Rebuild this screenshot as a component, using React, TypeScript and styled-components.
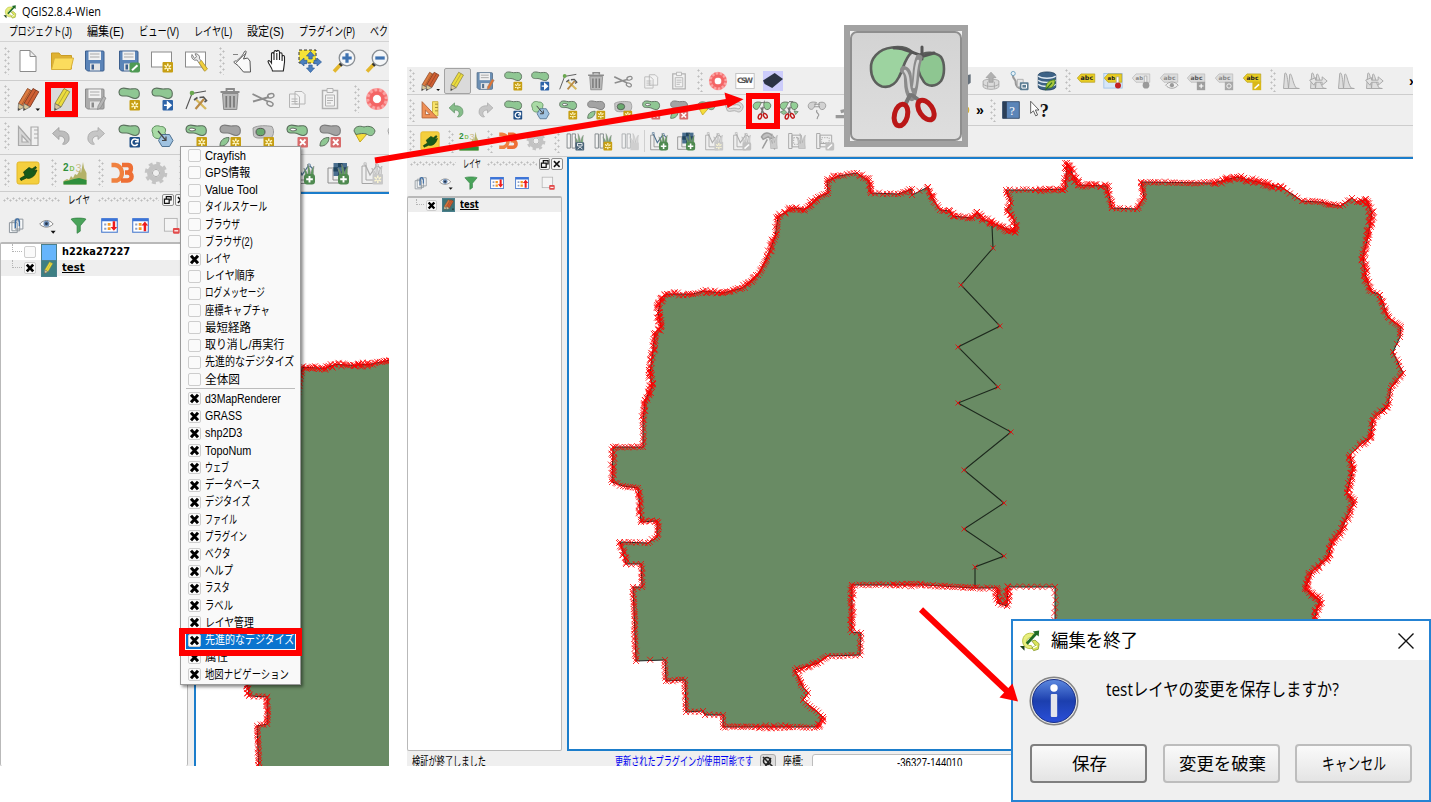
import React, { useLayoutEffect, useRef, useState } from 'react';
import styled, { createGlobalStyle } from 'styled-components';

const Global = createGlobalStyle`
  body { margin: 0; background: #fff; overflow: hidden; }
  * { box-sizing: border-box; }
`;

const GOTHIC = '"Liberation Sans", "Noto Sans CJK JP", sans-serif';
const UI = '"Open Sans", "Noto Sans CJK JP", sans-serif';

/* ---------- text fitted to a fixed advance width ---------- */

const FitBox = styled.span<{ $w: number }>`
  display: inline-block;
  flex: none;
  width: ${(p) => p.$w}px;
  white-space: nowrap;
`;
const FitInner = styled.span`
  display: inline-block;
  transform-origin: 0 50%;
`;
function Fit({ w, children }: { w: number; children: React.ReactNode }) {
  const ref = useRef<HTMLSpanElement>(null);
  const [k, setK] = useState(1);
  useLayoutEffect(() => {
    if (ref.current && ref.current.offsetWidth) setK(w / ref.current.offsetWidth);
  }, [w]);
  return (
    <FitBox $w={w}>
      <FitInner ref={ref} style={{ transform: `scaleX(${k})` }}>{children}</FitInner>
    </FitBox>
  );
}

/* ---------- icons, drawn in a 24 x 24 box ---------- */

const BLOB = 'M2 5.5C2 1 6 .6 10 1.6C14 2.6 15 1.4 18.5 1.8C23.5 2.6 23.5 10.5 19 11.4C15.5 12.2 13 9 9.500 9C5.500 9.200 2 9.200 2 5.500Z';
const G = '#8fc793';
const GO = '#5b705d';
const Blob = ({ c = G, o = GO }) => <path d={BLOB} fill={c} stroke={o} strokeWidth="1.1" />;
const Badge = ({ c, children }: { c: string; children?: React.ReactNode }) => (
  <g>
    <rect x="12.5" y="13" width="10.500" height="10.500" rx="1" fill={c} />
    {children}
  </g>
);
const Star = ({ c = '#c79f13' }) => (
  <Badge c={c}>
    <path d="M17.8 14.500V22M14.500 16.300L21 20.200M21 16.300L14.500 20.200" stroke="#fff8c8" strokeWidth="1.500" />
    <circle cx="17.8" cy="18.200" r="1.100" fill={c} />
  </Badge>
);
const Cross = () => (
  <Badge c="#d86b6b">
    <path d="M15 15.500l5.500 5.500M20.500 15.500l-5.500 5.500" stroke="#fff" strokeWidth="1.800" />
  </Badge>
);
const Plus = ({ c = '#4f8a50' }) => (
  <g>
    <rect x="12" y="13" width="11" height="10.500" rx="3" fill={c} />
    <path d="M17.500 15v6.500M14.200 18.200h6.600" stroke="#fff" strokeWidth="1.900" />
  </g>
);
const PenBadge = ({ c }: { c: string }) => (
  <g>
    <rect x="12.500" y="13.500" width="10.500" height="10" rx="2" fill={c} />
    <path d="M15 21.200l5.500-5" stroke="#fff" strokeWidth="1.900" />
  </g>
);
const Floppy = ({ c = '#5b84b8', o = '#3c5f8e' }) => (
  <g>
    <path d="M2.500 2h17.500a1 1 0 0 1 1 1v18a1 1 0 0 1-1 1H4.500l-2-2Z" fill={c} stroke={o} />
    <rect x="5.500" y="2.500" width="12.500" height="8.500" fill="#f1f1f1" />
    <path d="M7 5h9.500M7 8h9.500" stroke="#aaa" strokeWidth="1.200" />
    <rect x="7" y="14.500" width="10" height="7" fill="#e4e4e4" />
    <rect x="8.500" y="15.500" width="2.500" height="5" fill={o} />
  </g>
);
const Pencil = ({ x = 0, c, d }: { x?: number; c: string; d: string }) => (
  <g transform={`translate(${x} 0)`}>
    <path d="M13 1.500L18.800 4.800L10 20L4 16.500Z" fill={c} stroke={d} strokeWidth=".9" />
    <path d="M15.900 3.200L7 18.200" stroke={d} strokeWidth=".9" opacity=".7" />
    <path d="M4 16.500L10 20L3.500 23.500Z" fill="#d9c79a" stroke="#666" strokeWidth=".7" />
    <path d="M3.700 21l2.200 1.200-2.400 1.400Z" fill="#444" />
  </g>
);
const Page = ({ w = 20, h = 15 }) => <rect x="1.500" y="3" width={w} height={h} fill="#fff" stroke="#8b8b8b" />;
const Pen = ({ c = '#b5b5b5' }) => <path d="M20.500 9.500l2.500 1.500-5.500 10-3 1.500.5-3.500Z" fill={c} stroke="#888" strokeWidth=".7" />;
const Grass = ({ c }: { c: string }) => (
  <path d="M14 21C14 15 13 11 11.800 7C14.500 10 15.500 12 16 15C16 10 16 7 15.500 3C18 7 18.500 11 18.500 14C19 10 20 7 22 5C21 10 21.500 15 22 21Z" fill={c} stroke="#888" strokeWidth=".5" />
);
const MapRolls = ({ c = '#f5f5f5' }) => (
  <path d="M2.500 3.500h4v17h-4ZM8.500 3.500h4v17h-4Z" fill={c} stroke="#7d8387" strokeWidth="1.100" />
);
const VectorPage = ({ c = '#4d7190' }) => (
  <g fill="none">
    <path d="M6 5H2v17.500h15M6 4v15h12" stroke="#8d8d8d" />
    <path d="M5 3L10 14L17 4L21 8" stroke={c} strokeWidth="1.300" />
    <path d="M4 1.800h2.200V4H4ZM16 3h2.200v2.200H16Z" fill="#eee" stroke={c} strokeWidth=".7" />
  </g>
);
const Scissors = ({ col = '#c01818' }) => (
  <g fill="none">
    <path d="M10.500 9L14.500 16.500M13.500 8L11 17" stroke="#777" strokeWidth="1.900" />
    <ellipse cx="9.500" cy="19.800" rx="1.900" ry="3.100" transform="rotate(18 9.500 19.800)" stroke={col} strokeWidth="1.700" />
    <ellipse cx="16" cy="19" rx="1.900" ry="3.100" transform="rotate(-32 16 19)" stroke={col} strokeWidth="1.700" />
  </g>
);
const Lobes = ({ c = '#93cf96', o = '#63735f' }) => (
  <g fill={c} stroke={o} strokeWidth="1.100">
    <path d="M1.500 6.500C2 3 6 1.500 11.500 3C9.500 5.500 8.500 11 5.500 11.300C2.500 11.300 1.200 9 1.500 6.500Z" />
    <path d="M14.500 3.200C20 1.500 22.700 4 22.500 7C22.200 10 20 11.800 17.500 11.500C14.500 11 13.500 6 14.500 3.200Z" />
  </g>
);
const Tag = ({ c = '#e8cc23', o = '#b39b1a', s = 7.2, t = 'abc', tc = '#222' }) => (
  <g>
    <path d="M1.500 8.500L6 3.500H22.500V13.500H6Z" fill={c} stroke={o} strokeWidth=".8" />
    <text x="5.500" y="11" fontSize={s} fontWeight="700" fontFamily="DejaVu Sans" fill={tc}>{t}</text>
  </g>
);
const Layer = ({ d }: { d: 'up' | 'down' }) => (
  <g>
    <rect x="1" y="2.500" width="22" height="19" fill="#fff" stroke="#4f7fd0" strokeWidth="1.600" />
    <rect x="1" y="2" width="22" height="4" fill="#3b74d8" />
    <path d="M4.500 9h3v3h-3ZM4.500 15h3v3h-3Z" fill="#8e9fc2" />
    <path d="M9.500 8.500h4v4h-4ZM9.500 14.500h4v4h-4Z" fill="#f59a24" />
    {d === 'down' ? (
      <path d="M16.500 6h3.500v8h2.800L18.200 19.500L13.500 14h3Z" fill="#ee1c1c" />
    ) : (
      <path d="M16.500 20h3.500v-8h2.800L18.200 6.500L13.500 12h3Z" fill="#ee1c1c" />
    )}
  </g>
);
const Histo = ({ a = false }) => (
  <g fill="#dedede" stroke="#a5a5a5" strokeWidth="1.100">
    <path d="M3 21L4.500 3C6.500 0 8 8 9 21ZM9 21L10.500 4C13 1 14 16 18.500 20.500L22 21Z" />
    {a && <path d="M2 11L9 8v3h8V7l6 5-6 5v-3.500H9L7 17Z" fill="#e4e4e4" />}
  </g>
);

const ICONS: Record<string, React.ReactNode> = {
  doc: <path d="M4 1.500H14L20 7.500V22.500H4ZM14 1.500V7.500H20" fill="#fff" stroke="#8b8b8b" />,
  folder: (
    <g>
      <path d="M1.500 20V4h7.500l2 2.500h10.500V20Z" fill="#e0b232" stroke="#c99d27" />
      <path d="M1.500 20.500L4.500 9h19L20.800 20.500Z" fill="#fbdc5d" stroke="#d8b03a" />
    </g>
  ),
  save: <Floppy />,
  saveas: <g><Floppy /><PenBadge c="#4f9a54" /></g>,
  composer: <g><Page /><Star /></g>,
  composers: (
    <g>
      <Page />
      <path d="M8 5.500a4 4 0 0 0 5 5.500l7 10.500 3-2.200-7.500-9.500a4 4 0 0 0-4.500-5l1.500 3-2 1.700Z" fill="#e9e9e9" stroke="#777" strokeWidth=".9" />
      <path d="M15 13.500l2.500-2 6 8.500-2.800 2.300Z" fill="#f0cf3c" stroke="#b5962a" strokeWidth=".7" />
    </g>
  ),
  touch: (
    <g fill="#fafafa" stroke="#555" strokeWidth="1">
      <path d="M5.500 12c3-3 5.500-4 8-9.500 1.500-1.500 2 .3 1.200 2L12.500 10l4-1 2.500 3 .5 11H12.500L7 16.500 3 13.500c-.3-1.300 1-1.800 2.500-1.500Z" />
      <path d="M2 5.500h5M15 4L5 14" fill="none" strokeWidth=".7" />
    </g>
  ),
  hand: (
    <path
      d="M7.500 22C7 18 3.500 15.500 3 12.500c.3-1.500 2-1.200 3.500 1.500V5c0-1.800 2.300-1.800 2.500 0V3c.2-1.800 2.700-1.800 2.800 0v-.5c.2-1.500 2.500-1.500 2.700.5v2c.3-1.800 2.500-1.500 2.600.3V7.500c.5-1.500 2.200-1.200 2.400.3C20 14 19 17 18.300 22ZM9 5v6M11.800 4v7M14.500 5v6M17.100 7v5"
      fill="#fff" stroke="#222" strokeWidth="1.100"
    />
  ),
  panto: (
    <g>
      <rect x="1" y="1" width="17" height="13" fill="#f6e336" stroke="#333" strokeDasharray="3 2" />
      <path d="M12.500 2.500l4 4.500h-2.300v3h-3.400v-3H8.500ZM12.500 23.500l-4-4.500h2.300v-3h3.400v3h2.300ZM1.500 13l4.500-4v2.300h3v3.400H6V17ZM23.500 13l-4.500-4v2.300h-3v3.400h3V17Z" fill="#4a7fc0" stroke="#2c5c98" strokeWidth=".7" />
    </g>
  ),
  zoomin: (
    <g>
      <path d="M9.500 14.500L2 22.500" stroke="#e3b72d" strokeWidth="3.600" />
      <path d="M10 14.500L8 16.500" stroke="#333" strokeWidth="3.500" />
      <circle cx="15" cy="9" r="7.800" fill="#f4f6f8" stroke="#8a8f94" strokeWidth="1.300" />
      <path d="M15 4.300v9.400M10.300 9h9.400" stroke="#3f73b1" strokeWidth="3.200" />
    </g>
  ),
  zoomout: (
    <g>
      <path d="M9.500 14.500L2 22.500" stroke="#e3b72d" strokeWidth="3.600" />
      <path d="M10 14.500L8 16.500" stroke="#333" strokeWidth="3.500" />
      <circle cx="15" cy="9" r="7.800" fill="#f4f6f8" stroke="#8a8f94" strokeWidth="1.300" />
      <path d="M10.300 9h9.400" stroke="#3f73b1" strokeWidth="3.200" />
    </g>
  ),
  edits: (
    <g>
      <Pencil x={-1.500} c="#dd7b40" d="#8d4a26" />
      <Pencil x={4} c="#cf5f33" d="#7b3820" />
      <path d="M19.500 21.500h4.500l-2.200 2.500Z" fill="#111" />
    </g>
  ),
  pencil: <Pencil x={1} c="#ecdc3c" d="#8f8940" />,
  savegrey: <g><Floppy c="#ababab" o="#8b8b8b" /><Pen /></g>,
  saveedit: <g><Floppy c="#6c8fb3" o="#55708b" /><Pen c="#e37432" /></g>,
  add: <g><Blob /><Star /></g>,
  move: (
    <g><Blob /><Badge c="#2d63a8"><path d="M14 18.200h4M17.500 15l3.600 3.200-3.600 3.200Z" fill="#fff" stroke="#fff" strokeWidth="1.400" /></Badge></g>
  ),
  node: (
    <g fill="none">
      <path d="M2 22L8 6.500L22 4" stroke="#555" strokeWidth="1.100" />
      <circle cx="8" cy="6" r="2.300" fill="#6aa84f" />
      <path d="M12 12.500L22 22" stroke="#d6b85e" strokeWidth="2.400" />
      <path d="M20 12L11.500 22" stroke="#b98a45" strokeWidth="2.200" />
      <path d="M15.500 10.500l4-.5 3 3.500-2 1.500M10 13l3.500-2.500" stroke="#555" strokeWidth="1.600" />
    </g>
  ),
  trash: (
    <g>
      <path d="M4.500 6.500h15.500l-1.200 16H5.700Z" fill="#b9b9b9" stroke="#8b8b8b" />
      <path d="M8.300 9v11.500M12.200 9v11.500M16 9v11.500" stroke="#787878" strokeWidth="1.700" />
      <path d="M2.500 5h19M8.500 4V2h7.500v2" fill="none" stroke="#8b8b8b" strokeWidth="1.800" />
    </g>
  ),
  cut: (
    <g fill="none" stroke="#8d8d8d">
      <path d="M1.500 7L17 14.500M2 14.500L18 10" strokeWidth="1.900" />
      <ellipse cx="19.800" cy="8.800" rx="3.200" ry="2.100" transform="rotate(-15 19.800 8.800)" strokeWidth="1.400" />
      <ellipse cx="19" cy="16.700" rx="3.200" ry="2.100" transform="rotate(25 19 16.700)" strokeWidth="1.400" />
    </g>
  ),
  copy: (
    <g fill="#f2f2f2" stroke="#b5b5b5">
      <path d="M10 4.500h7l3 3V17h-10ZM4.500 7h7l3 3v10.500h-10Z" />
      <path d="M6.500 12h6M6.500 14.500h6M6.500 17h6" />
    </g>
  ),
  paste: (
    <g fill="#f2f2f2" stroke="#b2b2b2">
      <path d="M4.500 3.500h15v18h-15Z" strokeWidth="1.500" />
      <path d="M9 1.500h6v4H9ZM7.500 8h9v11h-9Z" />
      <path d="M9 11h6M9 13.500h6M9 16h4" />
    </g>
  ),
  help: (
    <g fill="none">
      <circle cx="12" cy="12" r="7.500" stroke="#fba3a3" strokeWidth="7" />
      <circle cx="12" cy="12" r="9" stroke="#f25555" strokeWidth="3" strokeDasharray="2 2.700" opacity=".6" />
      <circle cx="12" cy="12" r="6" stroke="#f03c3c" strokeWidth="3.500" opacity=".6" />
      <circle cx="12" cy="12" r="3.700" fill="#fff" />
    </g>
  ),
  csw: (
    <g>
      <rect x="1" y="3" width="22" height="18" fill="#fff" stroke="#bbb" />
      <text x="2.500" y="14.500" fontSize="9" fontWeight="700" fontFamily="DejaVu Sans" textLength="19" fill="#555">CSW</text>
    </g>
  ),
  dark: (
    <g>
      <rect x="0" y="0" width="24" height="24" fill="#ccccfb" />
      <path d="M0 11.500L14 2.500L24 9.500L11 20.500L2 15.500Z" fill="#2b3345" />
    </g>
  ),
  rulerg: (
    <g stroke="#a9a9a9" strokeWidth="1.200">
      <path d="M2.500 2.500L19 21.500H2.500ZM6 11.500V18H12Z" fill="#d7d7d7" fillRule="evenodd" />
      <path d="M15 3h7v18.500h-7Z" fill="#f0f0f0" />
      <path d="M18 6h4M18 10h4M18 14h4" />
    </g>
  ),
  ruler: (
    <g strokeWidth="1.100">
      <path d="M15 2h6.500v17H15Z" fill="#f8e36b" stroke="#c9b041" />
      <path d="M18 5h3.500M18 9h3.500M18 13h3.500" stroke="#998430" />
      <path d="M2.500 2L21 21.500H2.500ZM6.500 12V17.500H12Z" fill="#ef8f55" fillRule="evenodd" stroke="#b5653a" />
    </g>
  ),
  undog: <path d="M2.500 9.500L9 3.500V7C15 6.500 20 9 19 16C17.500 20 14 21 12.500 20C15.500 18 16 12 9 12v3.500Z" fill="#bdbdbd" stroke="#9c9c9c" strokeWidth=".8" />,
  undo: <path d="M2.500 9.500L9 3.500V7C15 6.500 20 9 19 16C17.500 20 14 21 12.500 20C15.500 18 16 12 9 12v3.500Z" fill="#86bd8a" stroke="#5b8e62" strokeWidth=".8" />,
  redo: <path d="M21.500 9.500L15 3.500V7C9 6.500 4 9 5 16C6.500 20 10 21 11.500 20C8.500 18 8 12 15 12v3.500Z" fill="#c6c6c6" stroke="#a4a4a4" strokeWidth=".8" />,
  rotate: (
    <g><Blob /><Badge c="#1f4e86"><path d="M20.500 16.200a3.300 3.300 0 1 0 .2 3.800M21 14.800v3h-3" fill="none" stroke="#fff" strokeWidth="1.500" /></Badge></g>
  ),
  simplify: (
    <g strokeWidth="1">
      <path d="M2 7C2 2 7 .8 10.500 2.500C14 2 17 5 15 8.500C17 12 13 16 10 14C6 16 2 12 3 10Z" fill="#a9dba5" stroke="#5f8f60" />
      <path d="M12 10.500h7.500l3.500 6-3.500 6H12l-3.500-6Z" fill="#9fc2e0" stroke="#4f7292" />
      <path d="M8 7L15.500 16M16 12.500v4h-4" fill="none" stroke="#444" strokeWidth="1.200" />
    </g>
  ),
  addring: <g><Blob /><path d="M5 5.500C6 3.500 9 4 12 5.500C10 7.200 6 7.500 5 5.500Z" fill="#fff" stroke="#555" strokeWidth=".9" /><Star /></g>,
  addpart: (
    <g><Blob c="#a3a3a3" o="#7a7a7a" /><path d="M2 22C2 16 6 13.500 11 13.500C11 18 8 22.500 2 22Z" fill={G} stroke={GO} /><Star /></g>
  ),
  fillring: (
    <g>
      <path d="M2 4C7 1 16 1.500 21 2.500C24 8 22 12 20 14C13 13 4 16 2.500 11.500Z" fill="#c6c6c6" stroke="#999" />
      <ellipse cx="9.500" cy="8" rx="4.500" ry="3.700" fill="#69a96e" stroke="#555" />
      <Star />
    </g>
  ),
  delring: <g><Blob /><path d="M5 5.500C6 3.500 9 4 12 5.500C10 7.200 6 7.500 5 5.500Z" fill="#fff" stroke="#555" strokeWidth=".9" /><Cross /></g>,
  delpart: (
    <g><Blob c="#a3a3a3" o="#7a7a7a" /><path d="M2 22C2 16 6 13.500 11 13.500C11 18 8 22.500 2 22Z" fill={G} stroke={GO} /><Cross /></g>
  ),
  reshape: (
    <g>
      <path d="M3 9L9 9L15 10L8 18Z" fill="#f5dc3a" stroke="#c7a820" />
      <path d="M2 7C2.500 2 8 1.500 12 3C16 1.500 22 2.500 23 7C22 12 18 12.500 15.500 10.500C12 8.500 7 10 4 10.500Z" fill={G} stroke={GO} />
    </g>
  ),
  offset: (
    <g fill="#dcdcdc" stroke="#a2a2a2">
      <path d="M2 7C2.500 2 8 1.500 12 3C16 1.500 22 2.500 23 8C22 14 18 15.500 15 13.500C12 11.500 7 15 4 13Z" />
      <path d="M5 8C6 5 9 5 12 6C16 5 19 6 20 8.500C19 11 17 11 15 10C11 9 8 11 6 10Z" fill="#eee" />
    </g>
  ),
  split: <g><Lobes /><path d="M11.500 3L14.500 3.200L15 .8" fill="none" stroke="#666" /><Scissors /></g>,
  splitparts: (
    <g>
      <Lobes />
      <path d="M1.500 14.500l5-2.500 3 3-4 2.500ZM18 13l5 1-3 3.500Z" fill={G} stroke={GO} strokeWidth=".8" />
      <path d="M12 2h5" stroke="#555" />
      <Scissors />
    </g>
  ),
  merge: (
    <g>
      <Lobes c="#d2d2d2" o="#9b9b9b" />
      <path d="M8.500 5h7M8.500 8h7M12 12c-3 4 5 4 1 8l-1 3" fill="none" stroke="#999" strokeWidth="1.300" />
    </g>
  ),
  tip: <path d="M2 20h20M8 14l8-2" stroke="#999" strokeWidth="4" />,
  plug: (
    <g>
      <rect x="1" y="1" width="22" height="22" rx="2" fill="#f4cf3e" stroke="#e3b829" />
      <path d="M4 17.500L9 14.500L7.500 11L13 6.500L16 8L19.500 5.500L20.500 7L17.500 9.800L21 9L19.500 12.500C18 16 13 18.500 10.500 17L5 19.500Z" fill="#175a1a" stroke="#0c3810" strokeWidth=".7" />
    </g>
  ),
  d2: (
    <g>
      <text x="0" y="9.500" fontSize="10" fontWeight="700" fontFamily="Liberation Sans" fill="#2f8f3c">2</text>
      <text x="6.500" y="10" fontSize="7" fontWeight="700" fontFamily="Liberation Sans" fill="#7fbf52">D</text>
      <text x="12.500" y="11" fontSize="11" fontFamily="Liberation Sans" fill="#cdbf90">3</text>
      <path d="M0.500 23.500V20L4 18L6 19L8 15L10 17L12 13L14 14L17 9L18 12L20 1L21 7L23.500 12V23.500Z" fill="#b4b268" />
      <path d="M.5 23.500V20.500L6 19.500L11 18L16 17L23.500 19V23.500Z" fill="#2f8f3c" />
    </g>
  ),
  d3: (
    <g fill="none" strokeWidth="4.400">
      <path d="M1.500 4H5a7.500 8 0 0 1 2 15.500H1.500" stroke="#f0813f" />
      <path d="M12 4h6c4 .5 4 7-.5 7.500H15M17.500 11.500c5.500 0 5.500 8 0 8H11" stroke="#ee6f35" />
    </g>
  ),
  gear: (
    <g fill="none">
      <circle cx="12" cy="12" r="9.800" stroke="#c4c4c4" strokeWidth="3" strokeDasharray="4 3.690" />
      <circle cx="12" cy="12" r="6.500" stroke="#c3c3c3" strokeWidth="5" />
      <circle cx="12" cy="12" r="3.600" fill="#efefef" stroke="#aeaeae" />
    </g>
  ),
  rollsave: <g><MapRolls /><Grass c="#79a877" /><rect x="12.500" y="13.500" width="10.500" height="10" rx="1" fill="#4a6478" /><path d="M15 15h5.500v3H15ZM15 22l3-3 3 3" fill="none" stroke="#fff" /></g>,
  rollnew: <g><MapRolls /><Grass c="#79a877" /><Star /></g>,
  rollgrey: <g opacity=".6"><MapRolls /><Grass c="#d0d0d0" /><rect x="12.500" y="14" width="10" height="9" fill="#bbb" /></g>,
  vadd: <g><VectorPage /><Grass c="#5b9a5c" /><Plus /></g>,
  radd: (
    <g>
      <path d="M6 7H2v15h15M7 6v13h10" fill="none" stroke="#8d8d8d" />
      <path d="M7.500 2h13.500v13H7.500Z" fill="#4a6f8f" />
      <path d="M12 2h4.500v4.300H12ZM7.500 6.300H12v4.300H7.500ZM16.500 6.300H21v4.300h-4.500ZM12 10.600h4.500V15H12Z" fill="#20455f" />
      <Grass c="#5b9a5c" />
      <Plus />
    </g>
  ),
  vgrey: <g opacity=".75"><VectorPage c="#999" /><Grass c="#d4d4d4" /><Star c="#bcbcbc" /></g>,
  vgrey2: <g opacity=".75"><VectorPage c="#999" /><Grass c="#d4d4d4" /><PenBadge c="#b0b0b0" /></g>,
  tools: (
    <g opacity=".8"><path d="M3 7C6 1 12 2 14 4L18 8L14 9L11 7L5 10ZM10 10L4 21M13 9L19 22" fill="#b5b5b5" stroke="#888" strokeWidth="1.800" /><Grass c="#c4c4c4" /></g>
  ),
  rgn: (
    <g opacity=".8"><path d="M2 3h4v18H2ZM6 5h11v14H6Z" fill="#f0f0f0" stroke="#999" strokeWidth="1.200" /><path d="M8 8h6v8H8Z" fill="none" stroke="#888" strokeDasharray="1.500 1.500" /><Grass c="#c4c4c4" /></g>
  ),
  rgn2: (
    <g opacity=".8"><path d="M2 3h4v18H2ZM6 5h14v10H6ZM6 15v4h7" fill="#f0f0f0" stroke="#999" strokeWidth="1.200" /><path d="M8 8h9v6H8Z" fill="none" stroke="#888" strokeDasharray="1.500 1.500" /><PenBadge c="#b5b5b5" /></g>
  ),
  layers: (
    <g fill="#f6f8fa" stroke="#8d959c" strokeWidth="1.400">
      <path d="M2 8h11v14H2ZM5.500 5.500h11v14h-11ZM10 3h11v14H10Z" />
      <path d="M10.500 15.500V8c0-7 5.500-7 5.500 0v5" fill="none" stroke="#3d6ea5" strokeWidth="1.900" />
    </g>
  ),
  eye: (
    <g>
      <path d="M1 10C6 3.500 15 3 20 10C14 16 6 15.500 1 10Z" fill="#fff" stroke="#777" strokeWidth="1.200" />
      <circle cx="10.500" cy="9.500" r="4.200" fill="#6f8fb8" />
      <circle cx="10.500" cy="9.500" r="2" fill="#26364c" />
      <path d="M16.500 19.500h7L20 23.500Z" fill="#111" />
    </g>
  ),
  filter: <path d="M1.500 3C5 1 19 1 22.500 3L14.500 12.500V20L10 23V12.500Z" fill="#4aa35a" stroke="#2d7d3e" />,
  down: <Layer d="down" />,
  up: <Layer d="up" />,
  remove: (
    <g>
      <rect x="2" y="2" width="18" height="18" fill="#f4f4f4" stroke="#b3b3b3" strokeWidth="1.300" />
      <rect x="14" y="15.500" width="9.500" height="8" rx="1.500" fill="#e24b4b" />
      <path d="M16 19.500h5.500" stroke="#fff" strokeWidth="1.800" />
    </g>
  ),
  dbdark: <path d="M4 8l16-4v10l-8 6Z" fill="#66717c" />,
  dbup: (
    <g fill="#dadada" stroke="#a1a1a1">
      <path d="M2.500 12v7c3 4 16 4 19 0v-7c-3-3-16-3-19 0ZM2.500 15.500c3 4 16 4 19 0M8 13v8M16 13v8" />
      <path d="M12 1.500l6 6.500h-3.500v5.500h-5V8H6Z" fill="#b0b0b0" />
    </g>
  ),
  graph: (
    <g>
      <path d="M5 3.500C3 9 9 10 8 14C8 18 11 21 15 21" fill="none" stroke="#999" strokeWidth="2.500" />
      <circle cx="5" cy="3" r="2.500" fill="#e8f2f8" stroke="#5f98b9" />
      <path d="M10 10h7v9h-7Z" fill="#e6e6e6" stroke="#aaa" />
      <rect x="13" y="13.500" width="10.500" height="9.500" rx="1" fill="#5b7c92" />
      <path d="M15.500 16h5.500v4.500h-5.500Z" fill="none" stroke="#fff" strokeWidth="1.200" />
    </g>
  ),
  db: (
    <g>
      <path d="M1.500 4.500C3 0 21 0 22.500 4.500V19.500C21 24 3 24 1.500 19.500Z" fill="#3d6286" stroke="#23425f" />
      <path d="M1.500 6C5 9.500 19 9.500 22.500 6M1.500 11C5 14.500 19 14.500 22.500 11M1.500 16C5 19.500 19 19.500 22.500 16" fill="none" stroke="#dfe9f1" strokeWidth="1.700" />
      <path d="M11 21C10 15 14 11 21.500 10.500C22 17 18 22 12 20Z" fill="#a9c83a" stroke="#3f7b25" />
      <path d="M10 23L18 14" stroke="#2f6d24" strokeWidth="1.500" />
    </g>
  ),
  tag: <Tag s={7.6} />,
  tagpin: (
    <g>
      <rect x="1" y="3" width="22" height="17.500" fill="#d7e7f8" stroke="#9fc0e6" />
      <Tag t="ab" s={6.5} />
      <path d="M16 7h3v8h-3Z" fill="#fff" stroke="#999" strokeWidth=".7" />
      <circle cx="18" cy="17.500" r="3.600" fill="#c32222" />
    </g>
  ),
  tagpin2: (
    <g><Tag t="ab" s={6.5} c="#e2e2e2" o="#b5b5b5" tc="#888" /><path d="M16 6h3v8h-3Z" fill="#eee" stroke="#999" strokeWidth=".7" /><circle cx="18" cy="17" r="4" fill="#9a9a9a" /></g>
  ),
  tageye: (
    <g><Tag c="#dcdcdc" o="#b5b5b5" tc="#888" /><path d="M8 17C12 12 19 12 23 17C19 22 12 22 8 17Z" fill="#eee" stroke="#999" /><circle cx="15.500" cy="17" r="2.500" fill="#999" /></g>
  ),
  tagmove: <g><Tag c="#dadada" o="#b5b5b5" tc="#555" /><rect x="13" y="13" width="10" height="10" fill="#9e9e9e" /><path d="M15.500 18h5.500M18.200 15.300v5.400" stroke="#fff" strokeWidth="1.300" /></g>,
  tagrot: <g><Tag c="#dcdcdc" o="#b5b5b5" tc="#888" /><rect x="13" y="13" width="10" height="10" fill="#a8a8a8" /><circle cx="18" cy="18" r="2.600" fill="none" stroke="#fff" /></g>,
  tagedit: <g><Tag /><rect x="12.500" y="13" width="10.500" height="10" fill="#d9b818" /><path d="M15 21l5.500-5" stroke="#fff" strokeWidth="1.900" /></g>,
  h1: <Histo />,
  h2: <Histo a />,
  sun: <circle cx="13" cy="12" r="6" fill="#f2c624" stroke="#c99f19" />,
  book: (
    <g>
      <path d="M2 2h20v20H2Z" fill="#5b85b8" stroke="#2b4361" />
      <path d="M2 2h5v20H2Z" fill="#2b3f58" />
      <text x="10" y="17.500" fontSize="15" fontFamily="Liberation Serif" fill="#fff">?</text>
    </g>
  ),
  what: (
    <g>
      <path d="M2 1.500V16l3.300-3 2.700 6 2.300-1-2.600-6H12Z" fill="#fff" stroke="#444" />
      <text x="13" y="20.500" fontSize="22" fontWeight="700" fontFamily="Liberation Serif" fill="#111">?</text>
    </g>
  ),
};

const Slot = styled.span<{ $w: number; $on?: boolean }>`
  flex: none;
  display: flex;
  align-items: center;
  justify-content: center;
  width: ${(p) => p.$w}px;
  height: ${(p) => (p.$on ? '26px' : '100%')};
  border: ${(p) => (p.$on ? '1px solid #a3a3a3' : '0')};
  border-radius: 2px;
  background: ${(p) => (p.$on ? '#dadada' : 'none')};
`;
const Glyph = styled.svg<{ $s: number }>`
  display: block;
  flex: none;
  width: ${(p) => p.$s}px;
  height: ${(p) => p.$s}px;
  overflow: visible;
`;
const Grip = styled.span<{ $w: number; $h: number }>`
  flex: none;
  width: ${(p) => p.$w}px;
  height: ${(p) => p.$h}px;
  background:
    radial-gradient(circle at 1.500px 1.500px, #bdbdbd .8px, transparent 1.300px) right 4px top 0 / 3px 6px repeat-y,
    radial-gradient(circle at 1.500px 4.500px, #bdbdbd .8px, transparent 1.300px) right 1px top 0 / 3px 6px repeat-y;
`;
const Gap = styled.span<{ $w: number }>`flex: none; margin-left: ${(p) => p.$w}px;`;
const Rule = styled.span`flex: none; width: 1px; height: 22px; background: #cfcfcf;`;
const More = styled.span<{ $w: number }>`
  flex: none;
  width: ${(p) => p.$w}px;
  text-align: center;
  font: 700 14px/16px ${GOTHIC};
`;
const Bar = styled.div<{ $h: number; $pad?: number }>`
  flex: none;
  display: flex;
  align-items: center;
  height: ${(p) => p.$h}px;
  padding-left: ${(p) => p.$pad ?? 0}px;
  border-bottom: 1px solid #cdcdcd;
  overflow: hidden;
`;

/* '|' is a grip, '/' a rule, '>>' the overflow mark, a number is empty space, '*' marks a pressed button */
function Tools({ items, w, s, grip, gh }: { items: string; w: number; s: number; grip: number; gh: number }) {
  return (
    <>
      {items.split(' ').map((n, i) => {
        if (n === '|') return <Grip key={i} $w={grip} $h={gh} />;
        if (n === '/') return <Rule key={i} />;
        if (n === '>>') return <More key={i} $w={12}>»</More>;
        if (n === '>') return <More key={i} $w={8}>›</More>;
        if (!isNaN(Number(n))) return <Gap key={i} $w={Number(n)} />;
        const on = n[0] === '*';
        return (
          <Slot key={i} $w={w} $on={on}>
            <Glyph $s={s} viewBox="0 0 24 24">{ICONS[on ? n.slice(1) : n]}</Glyph>
          </Slot>
        );
      })}
    </>
  );
}

/* ---------- windows ---------- */

const Canvas = styled.div`
  position: relative;
  display: flex;
  gap: 18px;
  width: 1431px;
  height: 802px;
  background: #fff;
  color: #000;
  font: 12px/16px ${GOTHIC};
  overflow: hidden;
`;
const Win = styled.section<{ $w: number; $h: number; $top: number }>`
  flex: none;
  display: flex;
  flex-direction: column;
  width: ${(p) => p.$w}px;
  height: ${(p) => p.$h}px;
  margin-top: ${(p) => p.$top}px;
  background: #efefef;
  overflow: hidden;
`;
const TitleBar = styled.header`
  flex: none;
  display: flex;
  align-items: center;
  gap: 5px;
  height: 23px;
  padding-left: 3px;
  background: #fff;
  font: 12px/16px ${UI};
`;
const MenuBar = styled.nav`
  flex: none;
  display: flex;
  align-items: center;
  height: 19px;
  padding-left: 9px;
  gap: 15px;
  border-bottom: 1px solid #d3d3d3;
`;
const Body = styled.div`flex: 1; display: flex; min-height: 0;`;
const Dock = styled.aside<{ $w: number }>`
  flex: none;
  display: flex;
  flex-direction: column;
  width: ${(p) => p.$w}px;
`;
const DockTitle = styled.div<{ $h: number; $gap: number }>`
  flex: none;
  display: flex;
  align-items: center;
  gap: ${(p) => p.$gap}px;
  height: ${(p) => p.$h}px;
  padding-left: 3px;
  font-size: 11px;
`;
const Dots = styled.span<{ $w: number }>`
  flex: none;
  width: ${(p) => p.$w}px;
  height: 6px;
  background:
    radial-gradient(circle at 1.500px 1.500px, #bdbdbd .8px, transparent 1.300px) 0 2px / 6px 3px repeat-x,
    radial-gradient(circle at 4.500px 1.500px, #bdbdbd .8px, transparent 1.300px) 0 0 / 6px 3px repeat-x;
`;
const DockBtns = styled.span`display: flex; gap: 1px; margin-left: -5px;`;
const DockBtn = styled.span`
  display: flex;
  width: 11.500px;
  height: 12px;
  border: 1px solid #8f8f8f;
  border-radius: 2px;
  background: #f6f6f6;
`;
const DockTools = styled.div<{ $h: number; $pad: number }>`
  flex: none;
  display: flex;
  align-items: center;
  height: ${(p) => p.$h}px;
  padding-left: ${(p) => p.$pad}px;
  overflow: hidden;
`;
const Tree = styled.div<{ $cut?: boolean }>`
  flex: 1;
  border: 1px solid #b9b9b9;
  border-width: 2px 1px ${(p) => (p.$cut ? 0 : 1)}px;
  border-radius: 2px;
  background: #fff;
  overflow: hidden;
`;
const TreeRow = styled.div<{ $h: number; $on?: boolean; $pad: number }>`
  display: flex;
  align-items: center;
  height: ${(p) => p.$h}px;
  padding-left: ${(p) => p.$pad}px;
  background: ${(p) => (p.$on ? '#eeeeee' : '#fff')};
  font: 700 11px/14px "DejaVu Sans", sans-serif;
`;
const Branch = styled.span<{ $w: number; $h: number }>`
  width: ${(p) => p.$w}px;
  height: ${(p) => p.$h}px;
  margin: 0 2px ${(p) => p.$h}px 0;
  border: dotted #b5b5b5;
  border-width: 0 0 1px 1px;
`;
const Swatch = styled.span<{ $c: string; $s: number }>`
  display: flex;
  width: ${(p) => p.$s}px;
  height: ${(p) => p.$s + 1}px;
  margin: 0 5px;
  background: ${(p) => p.$c};
  border: 1px solid #4a7f8c;
`;
const Underlined = styled.span`text-decoration: underline;`;
const Box = styled.span<{ $s?: number }>`
  flex: none;
  display: flex;
  width: ${(p) => p.$s ?? 13}px;
  height: ${(p) => p.$s ?? 13}px;
  border: 1px solid #cdcdcd;
  border-radius: 2px;
  background: #fafafa;
`;
const Check = ({ on, s }: { on?: boolean; s?: number }) => (
  <Box $s={s}>
    {on && (
      <svg viewBox="0 0 11 11" width="100%" height="100%">
        <path d="M2 1.800L9 9.200M9 1.800L2 9.200" stroke="#000" strokeWidth="3" />
      </svg>
    )}
  </Box>
);
const Splitter = styled.span<{ $w: number }>`
  flex: none;
  width: ${(p) => p.$w}px;
`;
const MapFrame = styled.div<{ $cut?: boolean }>`
  flex: 1;
  min-width: 0;
  border: solid #1b7dcb;
  border-width: 2px 0 ${(p) => (p.$cut ? 0 : 2)}px 2px;
  background: #fff;
`;
const MapSvg = styled.svg`display: block; width: 100%; height: 100%;`;
const Status = styled.footer`
  flex: none;
  display: flex;
  align-items: flex-start;
  height: 15px;
  padding: 3px 0 0 5px;
  font: 12px/16px ${GOTHIC};
  overflow: hidden;
`;
const Note = styled.span`margin-left: 129px; color: #0000f0;`;
const StatusBtn = styled.span`
  display: flex;
  width: 16px;
  height: 18px;
  margin: 0 7px;
  border: 1px solid #aaa;
  border-radius: 3px;
  background: #ddd;
`;
const Coord = styled.span`
  width: 300px;
  height: 20px;
  margin-left: 9px;
  padding-left: 84px;
  border: 1px solid #bdbdbd;
  border-radius: 3px;
  background: #fff;
`;

const Logo = ({ s }: { s: number }) => (
  <Glyph $s={s} viewBox="0 0 24 24">
    <path d="M16 4C9 2 4 6 4 12C4 18 9 21.500 15 20L13.500 17C10 17.500 8 15 8.500 12C9 9 11 8 14 8.500Z" fill="#e8ee7e" stroke="#b3bf3a" />
    <path d="M14 12l3.500-1 4.500 4-1 6-5 1.500-2-3 4-2.500Z" fill="#dbe45c" stroke="#8b9c2e" strokeWidth=".9" />
    <path d="M15.500 19.500l4-2" stroke="#fff" strokeWidth="1.400" />
    <path d="M8.500 15L19.500 3" stroke="#1f6b26" strokeWidth="3" />
    <path d="M15 1.500L22 .5L21.500 7Z" fill="#1f6b26" />
    <path d="M1 17.500H6V22.500Z" fill="#1c3f16" />
  </Glyph>
);

/* ---------- map ---------- */

type P = [number, number, number?];
/* x, y, marker spacing towards the next vertex */
const AREA: P[] = [
  [613, 447, 3], [643, 447, 3], [643, 420, 1.500], [645, 400, 1.200], [652, 387, 1.200], [650, 373, 1.500], [655, 333, 1.200], [661, 327, 1.200], [658, 313, 1.200],
  [661, 298, 1.500], [667, 294, 1.800], [693, 294, 2.500], [703, 291, 1.500], [723, 293, 2], [742, 288, 1.500], [758, 275, 2], [767, 257, 1.500], [775, 237, 1.800],
  [778, 217, 1.500], [792, 208, 1.500], [805, 209, 1.500], [818, 197, 2], [828, 193, 2.500], [827, 181, 1.500], [838, 176, 3], [857, 173, 1.800], [869, 181, 1.500],
  [871, 193, 4], [898, 194, 2.500], [912, 189, 4], [912, 195, 8], [928, 187, 1.200], [932, 197, 2.500], [940, 210, 2.500], [950, 211, 1.200], [953, 216, 2.500],
  [972, 218, 1.500], [977, 212, 1.500], [982, 219, 1.200], [1015, 232, 1.200], [1014, 220, 1.500], [1007, 210, 2], [1011, 203, 2], [1006, 190, 4], [1035, 190, 1.800], [1065, 189, 1.500],
  [1067, 163, 1], [1078, 185, 1.600], [1107, 186, 1.500], [1112, 208, 4], [1137, 209, 2], [1144, 197, 2], [1141, 182, 3], [1213, 183, 1.200], [1237, 177, 1.200],
  [1283, 188, 5], [1302, 201, 2.500], [1320, 202, 2], [1340, 206, 3], [1352, 198, 3], [1357, 202, 1.500], [1366, 199, 1.200], [1372, 213, 1.200], [1368, 237, 1.500],
  [1363, 257, 1.200], [1366, 277, 1.300], [1371, 291, 3], [1380, 295, 1.600], [1388, 317, 2], [1401, 327, 2.500], [1400, 337, 7], [1393, 352, 4], [1403, 373, 2],
  [1391, 388, 3], [1388, 405, 1.500], [1373, 420, 1.500], [1371, 437, 1.500], [1360, 445, 4], [1350, 455, 1.200], [1353, 470, 1.500], [1347, 493, 1.500], [1354, 502, 1.500],
  [1340, 533, 1.500], [1332, 542, 1.300], [1328, 558, 1.500], [1312, 572, 1.300], [1305, 589, 1.200], [1320, 600, 1.200], [1315, 617, 2], [1315, 640, 9], [1055, 640, 7],
  [1055, 587, 6], [1008, 587, 1.200], [1007, 606, 3], [998, 603, 1.200], [997, 588, 3.500], [973, 588, 2.500], [925, 585, 1.800], [890, 585, 3.500], [852, 585, 1.500],
  [852, 632, 4], [861, 633, 3], [860, 655, 4], [828, 656, 2], [818, 663, 1.500], [795, 670, 2], [803, 687, 3], [808, 693, 3], [803, 700, 3], [823, 717, 1.200],
  [817, 727, 3.500], [790, 727, 1.800], [755, 727, 3], [723, 727, 3], [723, 715, 5], [705, 715, 4], [703, 711, 4], [686, 712, 3], [685, 680, 3], [666, 681, 3], [665, 660, 15],
  [636, 661, 2.500], [633, 587, 5], [642, 587, 2.500], [641, 564, 5], [626, 564, 1.500], [620, 542, 4], [648, 543, 2.500], [657, 537, 1.800], [657, 521, 2.500],
  [641, 522, 1.800], [638, 488, 2.500], [623, 486, 3], [612, 482, 1.800],
];
const CUT: P[] = [
  [992, 226], [993, 248], [961, 285], [1000, 326], [958, 347], [998, 387], [958, 403], [1011, 432], [964, 470], [1004, 503], [964, 529], [1004, 556], [975, 567], [975, 587],
];
const SMALL: P[] = [
  [302, 368, 1.500], [325, 369, 1.300], [335, 365, 1.800], [350, 366, 1.200], [370, 365, 2], [389, 361, 2], [400, 361, 90], [400, 780, 90], [259, 780, 2.500], [257, 726, 3], [267, 724, 2],
  [267, 697, 5], [249, 696, 1.500], [245, 670, 3],
];
const toPath = (pts: P[], close = true) => 'M' + pts.map((p) => `${p[0]} ${p[1]}`).join('L') + (close ? 'Z' : '');
function marks(pts: P[]) {
  let d = '';
  let seed = 7;
  const rnd = () => ((seed = (seed * 16807) % 2147483647) / 2147483647 - 0.5) * 2;
  pts.forEach(([x, y, step = 3], i) => {
    const [nx, ny] = pts[(i + 1) % pts.length];
    const n = Math.max(1, Math.round(Math.hypot(nx - x, ny - y) / step));
    for (let k = 0; k < n; k++) {
      const j = k === 0 ? 0 : step < 1.400 ? 2.200 : step < 1.900 ? 1.700 : 0.8;
      const cx = x + ((nx - x) * k) / n + rnd() * j;
      const cy = y + ((ny - y) * k) / n + rnd() * j;
      d += `M${(cx - 3).toFixed(1)} ${(cy - 3).toFixed(1)}l6 6m0-6l-6 6`;
    }
  });
  return d;
}
const AREA_MARKS = marks(AREA);
const SMALL_MARKS = marks(SMALL);
const CUT_MARKS = CUT.slice(1).map(([x, y]) => `M${x - 2.500} ${y - 2.500}l5 5m0-5l-5 5`).join('');

/* ---------- overlays ---------- */

const Menu = styled.ul`
  position: absolute;
  left: 180px;
  top: 146px;
  width: 121px;
  height: 539px;
  margin: 0;
  padding: 0 5px;
  list-style: none;
  border: 1px solid #9a9a9a;
  background: #f9f9f9;
  box-shadow: 2px 2px 3px rgba(0, 0, 0, .45);
`;
const MenuItem = styled.li<{ $on?: boolean }>`
  display: flex;
  align-items: center;
  gap: 4px;
  height: 17.240px;
  padding-left: 2px;
  color: ${(p) => (p.$on ? '#fff' : '#000')};
  background: ${(p) => (p.$on ? '#0a74cf' : 'none')};
`;
const MenuRule = styled.li`height: 1px; margin: 0 0 1px; background: #bcbcbc;`;
const Frame = styled.span<{ $x: number; $y: number; $w: number; $h: number }>`
  position: absolute;
  left: ${(p) => p.$x}px;
  top: ${(p) => p.$y}px;
  width: ${(p) => p.$w}px;
  height: ${(p) => p.$h}px;
  border: 6px solid #f00;
`;
const Zoomed = styled.div`
  position: absolute;
  left: 844px;
  top: 25px;
  width: 124px;
  height: 122px;
  border: 6px solid #a2a2a2;
  background: #efefef;
`;
const ZoomedBtn = styled.div`
  width: 112px;
  height: 110px;
  padding: 1px;
  border: 2px solid #8e8e8e;
  border-radius: 7px;
  background: linear-gradient(#d3d3d3, #dedede);
`;
const Arrows = styled.svg`position: absolute; left: 0; top: 0; width: 1431px; height: 802px; pointer-events: none;`;

const Dialog = styled.section`
  position: absolute;
  left: 1011px;
  top: 619px;
  width: 420px;
  height: 183px;
  display: flex;
  flex-direction: column;
  border: 2px solid #2583d3;
  background: #f0f0f0;
  font: 18px/26px ${UI};
`;
const DialogTitle = styled.header`
  display: flex;
  align-items: center;
  height: 39px;
  padding: 0 15px 0 6px;
  background: #fff;
`;
const TitleText = styled.span`flex: 1; margin-left: 10px; padding-bottom: 1px;`;
const DialogBody = styled.div`display: flex; height: 84px; padding: 16px 0 0 16px;`;
const Message = styled.span`margin: 0 0 0 27px;`;
const Buttons = styled.div`display: flex; gap: 15.500px; padding-left: 17px;`;
const Button = styled.button<{ $main?: boolean }>`
  width: 117px;
  height: 39px;
  padding: 0;
  border: 2px solid ${(p) => (p.$main ? '#7f7f7f' : '#bdbdbd')};
  border-radius: 4px;
  background: linear-gradient(#fafafa, #e4e4e4);
  color: #000;
  font: 17px/24px ${UI};
`;

const MENU_TOP: [string, number][] = [
  ['Crayfish', 41], ['GPS情報', 45], ['Value Tool', 53], ['タイルスケール', 62], ['ブラウザ', 35], ['ブラウザ(2)', 48], ['レイヤ', 26],
  ['レイヤ順序', 50], ['ログメッセージ', 60], ['座標キャプチャ', 65], ['最短経路', 46], ['取り消し/再実行', 79], ['先進的なデジタイズ', 89], ['全体図', 35],
];
const MENU_BOTTOM: [string, number][] = [
  ['d3MapRenderer', 76], ['GRASS', 37], ['shp2D3', 37], ['TopoNum', 46], ['ウェブ', 24], ['データベース', 55], ['デジタイズ', 45], ['ファイル', 32],
  ['プラグイン', 42], ['ベクタ', 26], ['ヘルプ', 28], ['ラスタ', 25], ['ラベル', 28], ['レイヤ管理', 49], ['先進的なデジタイズ', 89], ['属性', 23], ['地図ナビゲーション', 84],
];
const MENUS: [string, number][] = [
  ['プロジェクト(J)', 63], ['編集(E)', 37], ['ビュー(V)', 40], ['レイヤ(L)', 38], ['設定(S)', 37], ['プラグイン(P)', 56], ['ベク', 18],
];

const PanelHead = ({ h, left, right, gap }: { h: number; left: number; right: number; gap: number }) => (
  <DockTitle $h={h} $gap={gap}>
    <Dots $w={left} />
    <Fit w={left > 50 ? 22 : 18}>レイヤ</Fit>
    <Dots $w={right} />
    <DockBtns>
      <DockBtn>
        <svg viewBox="0 0 10 10" width="100%" height="100%"><path d="M3.500 4V1.500h5V5H6.500M1.500 4h5v4.500h-5Z" fill="none" stroke="#111" strokeWidth="1.300" /></svg>
      </DockBtn>
      <DockBtn>
        <svg viewBox="0 0 10 10" width="100%" height="100%"><path d="M2 2l6 6M8 2l-6 6" stroke="#111" strokeWidth="1.600" /></svg>
      </DockBtn>
    </DockBtns>
  </DockTitle>
);

export default function App() {
  const big = { w: 33.6, s: 24, grip: 13.4, gh: 28 };
  const small = { w: 27.65, s: 20, grip: 11.5, gh: 23 };
  return (
    <Canvas>
      <Global />
      <Win $w={389} $h={766} $top={0}>
        <TitleBar><Logo s={14} /><Fit w={79}>QGIS2.8.4-Wien</Fit></TitleBar>
        <MenuBar>{MENUS.map(([t, w]) => <Fit key={t} w={w}>{t}</Fit>)}</MenuBar>
        <Bar $h={39}><Tools {...big} grip={11.2} items="|" /><Tools {...big} items="doc folder save saveas composer composers | touch hand panto zoomin zoomout" /></Bar>
        <Bar $h={37}><Tools {...big} grip={11.2} items="|" /><Tools {...big} items="edits *pencil savegrey add move node trash cut copy paste | help" /></Bar>
        <Bar $h={37}><Tools {...big} grip={11.2} items="|" /><Tools {...big} items="rulerg undog redo rotate simplify addring addpart fillring delring delpart reshape offset" /></Bar>
        <Bar $h={37}><Tools {...big} grip={11.2} items="|" /><Tools {...big} items="plug | d2 | d3 gear | rollsave rollnew rollgrey / vadd radd vgrey" /></Bar>
        <Body>
          <Dock $w={188}>
            <PanelHead h={16} left={57} right={61} gap={8} />
            <DockTools $h={34} $pad={1}><Tools w={31} s={17} grip={0} gh={0} items="layers eye filter down up remove" /></DockTools>
            <Tree $cut>
              <TreeRow $h={16} $pad={11}>
                <Branch $w={10} $h={8} /><Check s={12} /><Swatch $c="#66b5fb" $s={16} /><Fit w={68}>h22ka27227</Fit>
              </TreeRow>
              <TreeRow $h={16} $pad={11} $on>
                <Branch $w={10} $h={8} /><Check on s={12} />
                <Swatch $c="#3d7f83" $s={16}><Glyph $s={13} viewBox="0 0 24 24">{ICONS.pencil}</Glyph></Swatch>
                <Fit w={23}><Underlined>test</Underlined></Fit>
              </TreeRow>
            </Tree>
          </Dock>
          <Splitter $w={6} />
          <MapFrame $cut>
            <MapSvg viewBox="196 195 193 571" preserveAspectRatio="xMinYMin slice">
              <path d={toPath(SMALL)} fill="#698b64" stroke="#222" />
              <path d={SMALL_MARKS} stroke="#f00" strokeWidth=".85" fill="none" />
            </MapSvg>
          </MapFrame>
        </Body>
      </Win>

      <Win $w={1006} $h={699} $top={67}>
        <Bar $h={28}>
          <Tools {...small} grip={9} items="|" />
          <Tools {...small} items="edits *pencil saveedit add move node trash cut copy paste | help csw dark 163 dbdark dbup graph db | tag tagpin tagpin2 tageye tagmove tagrot tagedit | h1 h2 h1 h2 20 >" />
        </Bar>
        <Bar $h={31}>
          <Tools {...small} grip={9} items="|" />
          <Tools {...small} items="ruler undo redo rotate simplify addring addpart fillring delring delpart reshape offset split splitparts merge tip 91 sun -3 >> | book what" />
        </Bar>
        <Bar $h={31}>
          <Tools {...small} grip={9} items="|" />
          <Tools {...small} items="plug | d2 | d3 gear | rollsave rollnew rollgrey / vadd radd vgrey vgrey2 tools rgn rgn2" />
        </Bar>
        <Body>
          <Dock $w={155}>
            <PanelHead h={13} left={46} right={50} gap={6.5} />
            <DockTools $h={26} $pad={1}><Tools w={25.4} s={14} grip={0} gh={0} items="layers eye filter down up remove" /></DockTools>
            <Tree>
              <TreeRow $h={14} $pad={8} $on>
                <Branch $w={8} $h={6} /><Check on s={11} />
                <Swatch $c="#3d7377" $s={13}><Glyph $s={11} viewBox="0 0 24 24">{ICONS.edits}</Glyph></Swatch>
                <Fit w={19}><Underlined>test</Underlined></Fit>
              </TreeRow>
            </Tree>
          </Dock>
          <Splitter $w={5} />
          <MapFrame>
            <MapSvg viewBox="569 159 844 590" preserveAspectRatio="xMinYMin slice">
              <path d={toPath(AREA)} fill="#698b64" stroke="#222" />
              <path d={toPath(CUT, false)} fill="none" stroke="#1d291d" strokeWidth="1.100" />
              <path d={AREA_MARKS} stroke="#f00" strokeWidth=".8" fill="none" />
              <path d={CUT_MARKS} stroke="#e01010" strokeWidth=".9" fill="none" />
            </MapSvg>
          </MapFrame>
        </Body>
        <Status>
          <Fit w={74}>検証が終了しました</Fit>
          <Note><Fit w={138}>更新されたプラグインが使用可能です</Fit></Note>
          <StatusBtn>
            <svg viewBox="0 0 14 16" width="14" height="16"><circle cx="6" cy="6" r="3.500" fill="none" stroke="#222" strokeWidth="1.600" /><path d="M2 2l10 10M10 3L4 12" stroke="#222" strokeWidth="1.500" /></svg>
          </StatusBtn>
          <Fit w={20}>座標:</Fit>
          <Coord><Fit w={65}>-36327-144010</Fit></Coord>
        </Status>
      </Win>

      <Menu>
        {MENU_TOP.map(([t, w], i) => (
          <MenuItem key={t}><Check on={i === 6} /><Fit w={w}>{t}</Fit></MenuItem>
        ))}
        <MenuRule />
        {MENU_BOTTOM.map(([t, w], i) => (
          <MenuItem key={t} $on={i === 14}><Check on /><Fit w={w}>{t}</Fit></MenuItem>
        ))}
      </Menu>
      <Frame $x={179} $y={628} $w={123} $h={28} />
      <Frame $x={45} $y={82} $w={33} $h={35} />
      <Frame $x={746} $y={93} $w={34} $h={36} />

      <Zoomed>
        <ZoomedBtn>
          <svg viewBox="9 9 106 104" width="106" height="104">
            <g fill="none" strokeLinecap="round">
              <path d="M27 44C26 34 34 24 48 22.500C56 21.500 64 23 68 27C60 34 60 43 55 52C51 60 45 63 38 61.500C31 59 27 52 27 44Z" fill="#9dd3a0" stroke="#5c5f5c" strokeWidth="2.600" />
              <path d="M75 31C81 26 92 27 97 32C101 38 101 50 97 56C92 62 84 62 80 57C75 50 72 40 75 31Z" fill="#8ec691" stroke="#5c5f5c" strokeWidth="2.600" />
              <path d="M50 23C60 22 66 28 80 31L90 28M78 22V34" stroke="#555" strokeWidth="3" />
              <path d="M60 45C68 48 60 62 68 72" stroke="#8b8b8b" strokeWidth="8" />
              <path d="M75 33C70 45 74 54 68 72" stroke="#8b8b8b" strokeWidth="7" />
              <path d="M61 46C67 52 62 62 68 70M74 36C71 44 72 54 70 62" stroke="#d2d2d2" strokeWidth="2.500" />
              <path d="M66 70L62 78M68 70L76 76" stroke="#777" strokeWidth="4" />
              <ellipse cx="57" cy="90" rx="6.500" ry="11" transform="rotate(14 57 90)" stroke="#ba1717" strokeWidth="5" />
              <ellipse cx="82" cy="85" rx="6.500" ry="11" transform="rotate(-34 82 85)" stroke="#ba1717" strokeWidth="5" />
            </g>
          </svg>
        </ZoomedBtn>
      </Zoomed>

      <Dialog>
        <DialogTitle>
          <Logo s={22} />
          <TitleText><Fit w={87}>編集を終了</Fit></TitleText>
          <svg viewBox="0 0 16 16" width="16" height="16"><path d="M.5.5l15 15M15.500.5l-15 15" stroke="#111" strokeWidth="1.400" /></svg>
        </DialogTitle>
        <DialogBody>
          <svg viewBox="0 0 50 50" width="50" height="50">
            <defs>
              <linearGradient id="disc" x1="0" y1="0" x2="0" y2="1">
                <stop offset="0" stopColor="#5d8ae0" /><stop offset=".5" stopColor="#1c3fae" /><stop offset="1" stopColor="#2a4fd8" />
              </linearGradient>
            </defs>
            <circle cx="25" cy="25" r="23.800" fill="#e8e8e8" stroke="#858585" strokeWidth="1.500" />
            <circle cx="25" cy="25" r="21.500" fill="url(#disc)" stroke="#19308a" />
            <circle cx="25" cy="12" r="3.700" fill="#fff" />
            <rect x="21.800" y="18" width="6.400" height="23" rx="1" fill="#e4e6ec" />
          </svg>
          <Message><Fit w={233}>testレイヤの変更を保存しますか?</Fit></Message>
        </DialogBody>
        <Buttons>
          <Button $main><Fit w={35}>保存</Fit></Button>
          <Button><Fit w={87}>変更を破棄</Fit></Button>
          <Button><Fit w={64}>キャンセル</Fit></Button>
        </Buttons>
      </Dialog>

      <Arrows viewBox="0 0 1431 802">
        <path d="M375 160.500L728 101.700" stroke="#f00" strokeWidth="6" />
        <path d="M743.500 99.300L724.500 92.500L727.500 108Z" fill="#f00" />
        <path d="M921 609.500L1008 692" stroke="#f00" strokeWidth="6" />
        <path d="M1018 701.500L1012.500 683.500L999.500 697.500Z" fill="#f00" />
      </Arrows>
    </Canvas>
  );
}
